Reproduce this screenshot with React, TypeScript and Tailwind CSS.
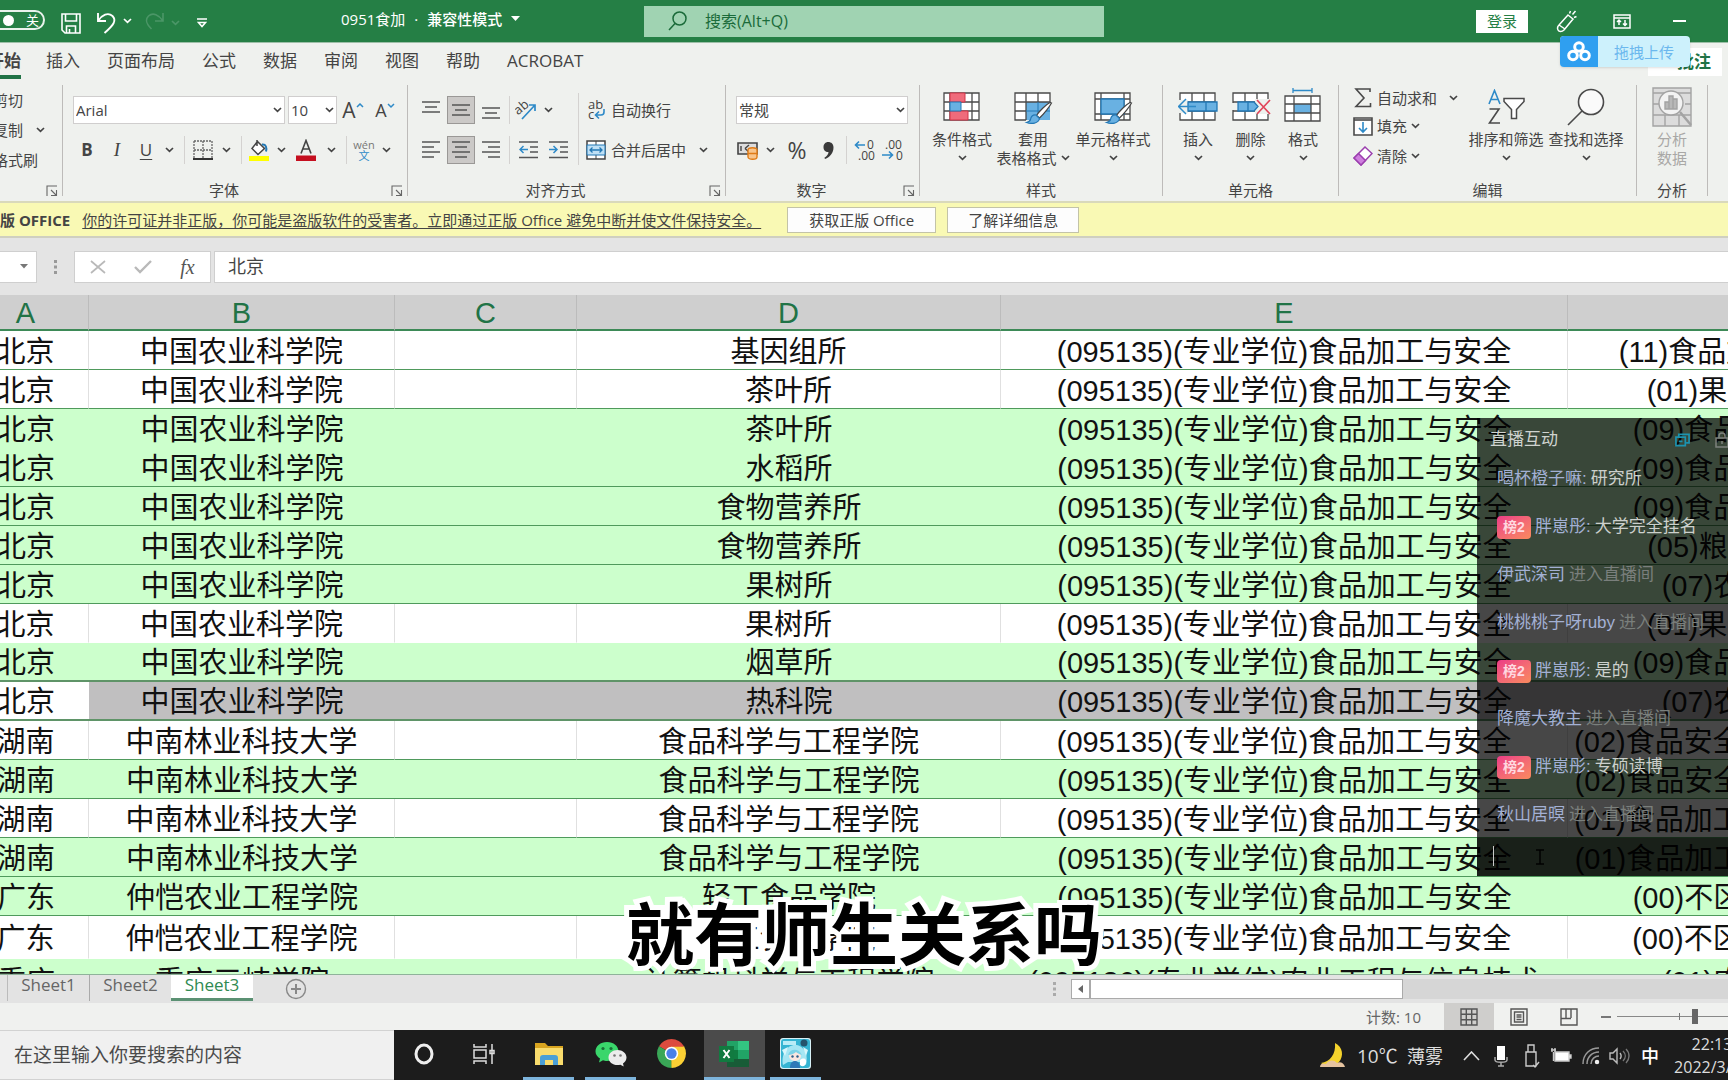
import type { ReactNode } from "react";

const UI = "font-['Open_Sans','Noto_Sans_CJK_SC',sans-serif]";
const CELL = "font-['Liberation_Sans','Noto_Sans_CJK_SC',sans-serif]";

/* ---------- sheet data ---------- */

type Row = {
  cells: [string, string, string, string, string];
  fill: "white" | "green" | "picked";
  line?: "none" | "thick";
};

const FOOD = "(095135)(专业学位)食品加工与安全";
const CAAS = "中国农业科学院";
const CSUFT = "中南林业科技大学";
const ZHKU = "仲恺农业工程学院";

const rows: Row[] = [
  { cells: ["北京", CAAS, "基因组所", FOOD, "(11)食品加工与质量安全"], fill: "white" },
  { cells: ["北京", CAAS, "茶叶所", FOOD, "(01)果茶加工与利用"], fill: "white" },
  { cells: ["北京", CAAS, "茶叶所", FOOD, "(09)食品加工与营养学"], fill: "green", line: "none" },
  { cells: ["北京", CAAS, "水稻所", FOOD, "(09)食品加工与营养学"], fill: "green" },
  { cells: ["北京", CAAS, "食物营养所", FOOD, "(09)食品加工与营养学"], fill: "green" },
  { cells: ["北京", CAAS, "食物营养所", FOOD, "(05)粮油加工与品质"], fill: "green" },
  { cells: ["北京", CAAS, "果树所", FOOD, "(07)农产品加工学"], fill: "green" },
  { cells: ["北京", CAAS, "果树所", FOOD, "(01)果蔬加工与贮藏"], fill: "white", line: "none" },
  { cells: ["北京", CAAS, "烟草所", FOOD, "(09)食品加工与营养学"], fill: "green", line: "thick" },
  { cells: ["北京", CAAS, "热科院", FOOD, "(07)农产品加工学"], fill: "picked", line: "thick" },
  { cells: ["湖南", CSUFT, "食品科学与工程学院", FOOD, "(02)食品安全与质量控制新技术"], fill: "white" },
  { cells: ["湖南", CSUFT, "食品科学与工程学院", FOOD, "(02)食品安全与质量控制新技术"], fill: "green" },
  { cells: ["湖南", CSUFT, "食品科学与工程学院", FOOD, "(01)食品加工与贮藏保鲜新技术"], fill: "white" },
  { cells: ["湖南", CSUFT, "食品科学与工程学院", FOOD, "(01)食品加工与贮藏保鲜新技术"], fill: "green" },
  { cells: ["广东", ZHKU, "轻工食品学院", FOOD, "(00)不区分各研究方向"], fill: "green" },
  { cells: ["广东", ZHKU, "轻工食品学院", FOOD, "(00)不区分各研究方向"], fill: "white", line: "none" },
  { cells: ["重庆", "重庆三峡学院", "计算机科学与工程学院", "(095136)(专业学位)农业工程与信息技术", "(01)农业信息技术"], fill: "green" },
];

type Msg = { name: string; text: string; kind: "say" | "join"; badge?: boolean };

const messages: Msg[] = [
  { name: "喝杯橙子嘛:", text: "研究所", kind: "say" },
  { name: "胖崽彤:", text: "大学完全挂名", kind: "say", badge: true },
  { name: "伊武深司", text: "进入直播间", kind: "join" },
  { name: "桃桃桃子呀ruby", text: "进入直播间", kind: "join" },
  { name: "胖崽彤:", text: "是的", kind: "say", badge: true },
  { name: "降魔大教主", text: "进入直播间", kind: "join" },
  { name: "胖崽彤:", text: "专硕读博", kind: "say", badge: true },
  { name: "秋山居暝", text: "进入直播间", kind: "join" },
];

/* ---------- small parts ---------- */

const Chevron = () => (
  <svg width="9" height="6" viewBox="0 0 9 6" fill="none" stroke="currentColor" strokeWidth="1.7">
    <path d="M1 1l3.5 3.3L8 1" />
  </svg>
);

const Btn = ({ label, className = "w-7", on, children }: { label: string; className?: string; on?: boolean; children: ReactNode }) => (
  <button
    aria-label={label}
    className={`flex h-7 shrink-0 items-center justify-center ${on ? "border border-[#9a9896] bg-[#cbc9c7]" : ""} ${className}`}
  >
    {children}
  </button>
);

const More = ({ label }: { label: string }) => (
  <Btn label={label} className="w-5">
    <Chevron />
  </Btn>
);

const Sep = ({ className = "mx-1" }: { className?: string }) => <span className={`h-7 w-px shrink-0 bg-[#d4d2d0] ${className}`} />;

const Select = ({ label, value, className }: { label: string; value: string; className: string }) => (
  <div className={`relative h-7 ${className}`}>
    <select aria-label={label} className="h-full w-full appearance-none border border-[#d0cece] bg-white pl-[2px] text-[15px] leading-5">
      <option>{value}</option>
    </select>
    <span className="pointer-events-none absolute top-[11px] right-[3px]">
      <Chevron />
    </span>
  </div>
);

const Launcher = () => (
  <button aria-label="更多设置" className="absolute right-1 bottom-1">
    <svg width="12" height="12" viewBox="0 0 12 12" fill="none" stroke="#666" strokeWidth="1.1">
      <path d="M1 11V1h10M5 5l5 5M10.5 5v5.500H5" />
    </svg>
  </button>
);

const Group = ({ name, className, launcher, children }: { name: string; className: string; launcher?: boolean; children: ReactNode }) => (
  <section aria-label={name} className="flex shrink-0">
    <div className={`relative flex h-[116px] flex-col ${className}`}>
      <div className="flex flex-1">{children}</div>
      <div className={`mb-[2px] h-[18px] text-center leading-[18px] ${launcher ? "pr-[22px]" : ""}`}>{name}</div>
      {launcher && <Launcher />}
    </div>
    <span className="h-[111px] w-px bg-[#bdbbb9]" />
  </section>
);

const Big = ({ icon, line1, line2, className, muted }: { icon: ReactNode; line1: string; line2?: string; className: string; muted?: boolean }) => (
  <button className={`flex shrink-0 flex-col items-center pt-[2px] whitespace-nowrap ${muted ? "text-[#a9a8a6]" : ""} ${className}`}>
    <span className="mb-[2px] flex h-10 items-center justify-center">{icon}</span>
    <span className="leading-5">{line1}</span>
    <span className="flex h-[18px] items-center gap-1 leading-[18px]">
      {line2}
      {!muted && <Chevron />}
    </span>
  </button>
);

/* line positions for the paragraph alignment glyphs */
const Lines = ({ spans, h = 18 }: { spans: [number, number, number][]; h?: number }) => (
  <svg width="18" height={h} viewBox={`0 0 18 ${h}`} stroke="#555" strokeWidth="1.5">
    {spans.map(([x1, x2, y]) => (
      <path key={y} d={`M${x1} ${y}H${x2}`} />
    ))}
  </svg>
);

const Indent = ({ out }: { out?: boolean }) => (
  <svg width="19" height="18" viewBox="0 0 19 18" fill="none" stroke="#555" strokeWidth="1.5">
    <path d="M0 1h19M11 6h8M11 11h8M0 16.500h19" />
    <path d={out ? "M9 8.500H1M4.500 5L1 8.500 4.500 12" : "M0 8.500h8M4.500 5L8 8.500 4.500 12"} stroke="#2e8ac8" />
  </svg>
);

const Grid = ({ children }: { children?: ReactNode }) => (
  <svg width="40" height="34" viewBox="0 0 40 34" fill="none">
    <path d="M2 3h35v27H2z" fill="#fff" />
    {children}
  </svg>
);

const Brush = () => (
  <>
    <path d="M37 12.500c-4 2-11 9-13.500 13l3 2.500C31 24 37 16 38.500 13z" fill="#fff" stroke="#444" strokeWidth="1.2" />
    <path d="M23 25c-4-.5-5 2-5.500 4.500-.5 2-2 2.500-4 3 5 1.800 12 1 13-4z" fill="#69b1e2" stroke="#2378b5" strokeWidth="1.2" />
  </>
);

const CondIcon = () => (
  <Grid>
    <path d="M2 3h35v27H2zM8 3v27M30 3v27M2 12h35M2 21h35" stroke="#4a4a4a" strokeWidth="1.3" />
    <path d="M8 3h15v9H8zM8 21h18v9H8z" fill="#ef6b7b" stroke="#d13448" />
    <path d="M8 12h11v9H8z" fill="#69b1e2" stroke="#2378b5" />
  </Grid>
);

const TableStyleIcon = () => (
  <Grid>
    <path d="M13 12h24v18H13z" fill="#69b1e2" />
    <path d="M2 3h35v9H2zM13 3v27M25 3v9M2 12v18h11M2 21h11" stroke="#4a4a4a" strokeWidth="1.3" />
    <path d="M25 12v18M13 21h24" stroke="#2378b5" />
    <Brush />
  </Grid>
);

const CellStyleIcon = () => (
  <Grid>
    <path d="M2 3h35v27H2zM8 3v27M31 3v27M2 9h35M2 24h35" stroke="#4a4a4a" strokeWidth="1.3" />
    <path d="M8 9h23v15H8z" fill="#69b1e2" stroke="#2378b5" strokeWidth="1.3" />
    <Brush />
  </Grid>
);

const InsertIcon = () => (
  <Grid>
    <path d="M2 3h35v27H2zM14 3v27M26 3v27M2 12h35M2 21h35" stroke="#4a4a4a" strokeWidth="1.3" />
    <path d="M0 10h10v13H0z" fill="#eef1ee" />
    <path d="M10 12h29v9H10zM28 12v9" fill="#69b1e2" stroke="#2378b5" strokeWidth="1.3" />
    <path d="M18 16.500H1M8 9l-7.500 7.500L8 24" stroke="#2e8ac8" strokeWidth="1.5" />
  </Grid>
);

const DeleteIcon = () => (
  <Grid>
    <path d="M2 3h35v27H2zM14 3v27M26 3v27M2 12h35M2 21h35" stroke="#4a4a4a" strokeWidth="1.3" />
    <path d="M0 13h6v7H0zM24 9h15v15H24z" fill="#eef1ee" />
    <path d="M7 12h16l4 4.500-4 4.500H7zM17 12v9" fill="#69b1e2" stroke="#2378b5" strokeWidth="1.3" />
    <path d="M26 10l13 14M39 10L26 24" stroke="#e0455a" strokeWidth="1.7" />
  </Grid>
);

const FormatIcon = () => (
  <svg width="40" height="40" viewBox="0 0 40 40" fill="none">
    <path d="M2 9h35v25H2z" fill="#fff" />
    <path d="M11 17h17v9H11z" fill="#69b1e2" />
    <path d="M2 9h35v25H2zM11 9v25M28 9v25M2 17h35M2 26h35" stroke="#4a4a4a" strokeWidth="1.3" />
    <path d="M10 3.500h19M10 1v5M29 1v5" stroke="#2e8ac8" strokeWidth="1.3" />
  </svg>
);

const SortIcon = () => (
  <svg width="38" height="36" viewBox="0 0 38 36" fill="none">
    <path d="M2 15L7.500 1.500 13 15M4 10.500h7" stroke="#2e8ac8" strokeWidth="1.6" />
    <path d="M2.500 20h9.500L2.500 34H13" stroke="#4a4a4a" strokeWidth="1.6" />
    <path d="M17 9.500h20v3l-7.500 8v9h-5v-9l-7.500-8z" fill="#fff" stroke="#4a4a4a" strokeWidth="1.5" />
  </svg>
);

const FindIcon = () => (
  <svg width="38" height="38" viewBox="0 0 38 38" fill="none" stroke="#4a4a4a" strokeWidth="1.6">
    <circle cx="24" cy="14" r="12.500" fill="#fafafa" />
    <path d="M15 23L1 37" />
  </svg>
);

const AnalyzeIcon = () => (
  <svg width="40" height="40" viewBox="0 0 40 40" fill="none" stroke="#a3a3a3" strokeWidth="1.4">
    <path d="M1 1h38v38H1z" fill="#dcdcdc" />
    <path d="M1 6h38M1 28h38M13 28v11M27 28v11M1 17h6M33 17h6" />
    <circle cx="19" cy="16" r="12" fill="#f3f3f3" />
    <path d="M28 25l11 13" strokeWidth="2.500" />
    <path d="M13 15h4v7h-4zM17 9h4v13h-4zM21 12h4v10h-4z" fill="#b8b8b8" />
  </svg>
);

/* ---------- window sections ---------- */

const TitleBar = () => (
  <header className="relative flex h-[42px] shrink-0 items-center bg-[#257f45] text-[15px] text-white">
    <button aria-label="自动保存" className="-ml-3 mb-[2px] flex h-5 w-[57px] items-center gap-3 rounded-full border-2 border-white/90 pl-[13px] text-[13px] leading-4">
      <span className="h-[11px] w-[11px] rounded-full bg-white" />关
    </button>
    <button aria-label="保存" className="ml-4 pt-1">
      <svg width="20" height="21" viewBox="0 0 20 21" fill="none" stroke="#fff" strokeWidth="1.6">
        <path d="M1 1h18v19H4l-3-3zM4.500 1v7h11V1M5.500 20v-7h9v7M8.500 20v-4" />
      </svg>
    </button>
    <button aria-label="撤消" className="ml-[15px] pt-1">
      <svg width="21" height="22" viewBox="0 0 21 22" fill="none" stroke="#fff" strokeWidth="1.9">
        <path d="M2 1v8h8M2.500 8.500C6 3 12 0 16.500 4c4.500 4.500 1 9-8 17" />
      </svg>
    </button>
    <span className="ml-[6px]"><Chevron /></span>
    <button aria-label="恢复" className="ml-3 flex items-center pt-1 text-[#4b9667]">
      <svg width="21" height="22" viewBox="0 0 21 22" fill="none" stroke="currentColor" strokeWidth="1.6">
        <path d="M19 1v8h-8M18.500 8.500C15 3 9 0 4.500 4c-4.500 4.500-1 9 3 13" />
      </svg>
      <span className="ml-[6px]"><Chevron /></span>
    </button>
    <button aria-label="自定义快速访问工具栏" className="ml-[17px] pt-1">
      <svg width="10" height="10" viewBox="0 0 10 10" fill="none" stroke="#fff" strokeWidth="1.5">
        <path d="M0 1h10M1.500 4.500h7L5 8.500z" />
      </svg>
    </button>
    <div className="ml-[134px] flex items-center gap-[9px] pb-[5px] leading-5 whitespace-nowrap">
      <span>0951食加</span>
      <span>·</span>
      <span className="font-medium">兼容性模式</span>
      <svg width="9" height="6" viewBox="0 0 9 6" fill="#fff"><path d="M0 0h9L4.500 5z" /></svg>
    </div>
    <label className="absolute inset-y-0 left-1/2 my-auto ml-[-220px] flex h-[31px] w-[460px] items-center bg-[#a0d3b2] pl-6 text-[#1b6b3a]">
      <svg width="19" height="20" viewBox="0 0 19 20" fill="none" stroke="currentColor" strokeWidth="1.5">
        <circle cx="11.500" cy="7.500" r="6.500" />
        <path d="M7 12.500L1 19" />
      </svg>
      <input aria-label="搜索" placeholder="搜索(Alt+Q)" className="ml-[18px] flex-1 bg-transparent text-[16px] leading-5 outline-none placeholder:text-[#1b6b3a]" />
    </label>
    <button className="ml-auto h-[23px] w-[52px] bg-white leading-[22px] text-[#257f45]">登录</button>
    <button aria-label="绘图" className="ml-7">
      <svg width="21" height="23" viewBox="0 0 21 23" fill="none" stroke="#fff" strokeWidth="1.5">
        <path d="M12 5l5 4-9 11c-2 2-5 2-6 0s0-4 1-5zM3 15l6 4M13.500 3.500l1-2.500M16.500 4.500l3-3.500M18 7.500l2.500-1" />
      </svg>
    </button>
    <button aria-label="功能区显示选项" className="ml-9">
      <svg width="18" height="15" viewBox="0 0 18 15" fill="none" stroke="#fff" strokeWidth="1.5">
        <path d="M1 1h16v13H1zM1 4h16" />
        <path d="M6 11V6.500M4 8l2-2 2 2M12 6v5M10 9.500l2 2 2-2" />
      </svg>
    </button>
    <button aria-label="最小化" className="mr-[42px] ml-[42px] h-4 w-[13px]">
      <span className="block h-[2px] bg-white" />
    </button>
  </header>
);

const tabs = ["插入", "页面布局", "公式", "数据", "审阅", "视图", "帮助", "ACROBAT"];

const TabRow = () => (
  <nav className="mb-[7px] flex h-9 shrink-0 border-t border-[#9dbfa8] text-[17px]">
    <button className="-ml-[13px] h-9 border-b-4 border-[#217346] pt-1 leading-7 font-bold">开始</button>
    <div className="ml-[25px] flex gap-[27px] pt-1 leading-7">
      {tabs.map((t) => (
        <button key={t} className="h-7">{t}</button>
      ))}
    </div>
    <button className="mt-[5px] mr-[6px] ml-auto h-7 w-[74px] bg-white pr-[11px] text-right leading-7 font-bold text-[#217346]">批注</button>
  </nav>
);

const Ribbon = () => (
  <div className="flex h-[116px] shrink-0 text-[15px] leading-5">
    <Group name="" launcher className="-ml-10 w-[102px]">
      <div className="flex flex-col pl-[33px]">
        <button className="flex h-[30px] items-center">剪切</button>
        <button className="flex h-[30px] items-center gap-[13px]">复制 <Chevron /></button>
        <button className="flex h-[30px] items-center whitespace-nowrap">格式刷</button>
      </div>
    </Group>

    <Group name="字体" launcher className="w-[344px]">
      <div className="flex flex-col gap-3 pt-[11px] pl-[10px]">
        <div className="flex">
          <Select label="字体" value="Arial" className="mr-[3px] w-[212px]" />
          <Select label="字号" value="10" className="w-[49px]" />
          <Btn label="增大字号" className="w-8 text-[21px]">
            A<svg width="8" height="14" viewBox="0 0 8 14" fill="none" stroke="#2e8ac8" strokeWidth="1.500"><path d="M1 4l3-3 3 3" /></svg>
          </Btn>
          <Btn label="减小字号" className="w-8 text-[18px]">
            A<svg width="8" height="14" viewBox="0 0 8 14" fill="none" stroke="#2e8ac8" strokeWidth="1.500"><path d="M1 1l3 3 3-3" /></svg>
          </Btn>
        </div>
        <div className="flex">
          <Btn label="加粗" className="w-7 text-[17px] font-bold">B</Btn>
          <Btn label="倾斜" className="w-8 font-['Liberation_Serif',serif] text-[19px] italic">I</Btn>
          <Btn label="下划线" className="w-[26px] text-[17px] underline underline-offset-[3px]">U</Btn>
          <More label="下划线样式" />
          <Sep className="mx-[5px]" />
          <Btn label="边框" className="w-[26px]">
            <svg width="20" height="20" viewBox="0 0 20 20" fill="none" stroke="#666" strokeWidth="1.300">
              <path d="M1 1h18v18M1 1v18M10 1v17M1 10h18" strokeDasharray="2 1" />
              <path d="M0 19h20" stroke="#333" strokeWidth="2" />
            </svg>
          </Btn>
          <More label="边框样式" />
          <Sep className="mx-[5px]" />
          <Btn label="填充颜色" className="w-6">
            <svg width="22" height="22" viewBox="0 0 22 22" fill="none">
              <path d="M9.500 2.500l7 7-6.500 6-6-6zM9 1v6" stroke="#444" strokeWidth="1.500" fill="#fff" />
              <path d="M14 5.500c4-.5 5 3 4 7" stroke="#2378b5" strokeWidth="2" />
              <path d="M1 17h20v5H1z" fill="#ffff00" />
            </svg>
          </Btn>
          <More label="填充颜色选项" />
          <Btn label="字体颜色" className="w-[30px]">
            <svg width="20" height="22" viewBox="0 0 20 22" fill="none">
              <path d="M5 14.500L10 1.500l5 13M6.500 10h7" stroke="#444" strokeWidth="1.600" />
              <path d="M0 16.500h20V22H0z" fill="#c50f1f" />
            </svg>
          </Btn>
          <More label="字体颜色选项" />
          <Sep className="mx-[5px]" />
          <Btn label="拼音" className="w-6 flex-col text-[11px] text-[#777]">
            <span className="leading-[11px]">wén</span>
            <span className="text-[11px] leading-3 text-[#2e8ac8]">文</span>
          </Btn>
          <More label="拼音选项" />
        </div>
      </div>
    </Group>

    <Group name="对齐方式" launcher className="w-[317px]">
      <div className="flex w-[170px] flex-col gap-3 pt-[11px] pl-[9px]">
        <div className="flex">
          <Btn label="顶端对齐"><Lines spans={[[0, 18, 1], [3, 15, 6], [0, 18, 11]]} /></Btn>
          <Btn label="垂直居中" on className="mx-[2px] w-7"><Lines spans={[[0, 18, 4], [3, 15, 9], [0, 18, 14]]} /></Btn>
          <Btn label="底端对齐"><Lines spans={[[0, 18, 7], [3, 15, 12], [0, 18, 17]]} /></Btn>
          <Sep />
          <Btn label="方向" className="w-6">
            <svg width="22" height="22" viewBox="0 0 22 22" fill="none">
              <text x="0" y="14" fontSize="13" fill="#444" transform="rotate(-40 5 11)">ab</text>
              <path d="M7 20L20 6M14 6h6v6" stroke="#2e8ac8" strokeWidth="1.700" />
            </svg>
          </Btn>
          <More label="方向选项" />
        </div>
        <div className="flex">
          <Btn label="左对齐"><Lines spans={[[0, 18, 1], [0, 12, 6], [0, 18, 11], [0, 12, 16]]} /></Btn>
          <Btn label="居中" on className="mx-[2px] w-7"><Lines spans={[[0, 18, 1], [3, 15, 6], [0, 18, 11], [3, 15, 16]]} /></Btn>
          <Btn label="右对齐"><Lines spans={[[0, 18, 1], [6, 18, 6], [0, 18, 11], [6, 18, 16]]} /></Btn>
          <Sep />
          <Btn label="减少缩进量"><Indent out /></Btn>
          <Btn label="增加缩进量" className="ml-[2px] w-7"><Indent /></Btn>
        </div>
      </div>
      <span className="mt-2 h-[72px] w-px bg-[#d4d2d0]" />
      <div className="flex flex-col gap-3 pt-[11px] pl-[7px]">
        <button className="flex h-7 items-center gap-[5px]">
          <svg width="20" height="20" viewBox="0 0 20 20" fill="none">
            <text x="2" y="9" fontSize="13" fill="#444">ab</text>
            <text x="2" y="19" fontSize="13" fill="#444">c</text>
            <path d="M18 9v3c0 2-1 3-3 3h-5M13 11.500L9.500 15l3.500 3.500" stroke="#2e8ac8" strokeWidth="1.600" />
          </svg>
          自动换行
        </button>
        <div className="flex">
          <button className="mr-[7px] flex h-7 items-center gap-[5px]">
            <svg width="20" height="20" viewBox="0 0 20 20" fill="none">
              <path d="M1 1h18v18H1z" fill="#fff" stroke="#444" strokeWidth="1.500" />
              <path d="M10 1v4M10 15v4" stroke="#444" />
              <path d="M1 5h18v10H1z" fill="#bfe0f5" stroke="#2378b5" />
              <path d="M4 10h12M6.500 7.500L4 10l2.500 2.500M13.500 7.500L16 10l-2.500 2.500" stroke="#2378b5" strokeWidth="1.300" />
            </svg>
            合并后居中
          </button>
          <More label="合并选项" />
        </div>
      </div>
    </Group>

    <Group name="数字" launcher className="w-[193px]">
      <div className="flex flex-col gap-3 pt-[11px] pl-[10px]">
        <Select label="数字格式" value="常规" className="w-[172px]" />
        <div className="flex">
          <Btn label="会计数字格式" className="w-6">
            <svg width="22" height="20" viewBox="0 0 22 20" fill="none">
              <path d="M1 3h19v11H1z" fill="#ddd" stroke="#444" strokeWidth="1.600" />
              <path d="M4 6v5M8 8.500L12 5M8 8.500L12 12" stroke="#444" strokeWidth="1.400" />
              <path d="M11 10c0-3 9-3 9 0v7c0 3-9 3-9 0zM11 13.500h9" fill="#f8c58c" stroke="#e07b16" strokeWidth="1.400" />
            </svg>
          </Btn>
          <More label="会计格式选项" />
          <Btn label="百分比样式" className="w-[34px] text-[23px]">%</Btn>
          <Btn label="千位分隔样式" className="w-7">
            <svg width="11" height="17" viewBox="0 0 11 17" fill="#3a3a3a">
              <path d="M5 0c3.500 0 5.500 2.200 5.500 5.500C10.500 11 7 15 2 17l-.6-1.200C4 14 5.500 12 5.500 10 2.500 10.200.5 8 .5 5.200.5 2.200 2.500 0 5 0z" />
            </svg>
          </Btn>
          <Sep />
          <Btn label="增加小数位数">
            <svg width="22" height="22" viewBox="0 0 22 22" fill="none">
              <text x="13" y="10" fontSize="12" fill="#444">0</text>
              <text x="4" y="21" fontSize="12" fill="#444">.00</text>
              <path d="M11 6H1M5 2.500L1.500 6 5 9.500" stroke="#2e8ac8" strokeWidth="1.600" />
            </svg>
          </Btn>
          <Btn label="减少小数位数">
            <svg width="22" height="22" viewBox="0 0 22 22" fill="none">
              <text x="3" y="10" fontSize="12" fill="#444">.00</text>
              <text x="14" y="21" fontSize="12" fill="#444">0</text>
              <path d="M0 16h11M7 12.500l3.500 3.500L7 19.500" stroke="#2e8ac8" strokeWidth="1.600" />
            </svg>
          </Btn>
        </div>
      </div>
    </Group>

    <Group name="样式" className="w-[242px]">
      <Big icon={<CondIcon />} line1="条件格式" className="ml-[9px] w-[66px]" />
      <Big icon={<TableStyleIcon />} line1="套用" line2="表格格式" className="w-[76px]" />
      <Big icon={<CellStyleIcon />} line1="单元格样式" className="w-[84px]" />
    </Group>

    <Group name="单元格" className="w-[175px]">
      <Big icon={<InsertIcon />} line1="插入" className="ml-[9px] w-[52px]" />
      <Big icon={<DeleteIcon />} line1="删除" className="w-[53px]" />
      <Big icon={<FormatIcon />} line1="格式" className="w-[52px]" />
    </Group>

    <Group name="编辑" className="w-[297px]">
      <div className="flex w-[127px] flex-col pl-[14px]">
        <button className="flex h-[26px] items-center gap-1">
          <svg width="20" height="20" viewBox="0 0 20 20" fill="none" stroke="#4a4a4a" strokeWidth="1.600">
            <path d="M17 4V1H3l8 9-8 8.500h14.500V15" />
          </svg>
          自动求和
          <span className="ml-2"><Chevron /></span>
        </button>
        <button className="flex h-[30px] items-center gap-1">
          <svg width="20" height="20" viewBox="0 0 20 20" fill="none" stroke="#4a4a4a" strokeWidth="1.600">
            <path d="M1 2h18v17H1z" fill="#fff" />
            <path d="M1 4h18" />
            <path d="M10 6v10M6 12l4 4 4-4" stroke="#2e8ac8" />
          </svg>
          填充 <Chevron />
        </button>
        <button className="flex h-[30px] items-center gap-1">
          <svg width="20" height="20" viewBox="0 0 20 20" fill="none" stroke="#9b3fae" strokeWidth="1.500">
            <path d="M12 1l7 6.500L8 19l-7-7z" fill="#fff" />
            <path d="M5.500 7.500l7 7L8 19l-7-7z" fill="#cf7ede" />
          </svg>
          清除 <Chevron />
        </button>
      </div>
      <Big icon={<SortIcon />} line1="排序和筛选" className="w-20" />
      <Big icon={<FindIcon />} line1="查找和选择" className="w-20" />
    </Group>

    <Group name="分析" className="w-[70px]">
      <Big icon={<AnalyzeIcon />} line1="分析" line2="数据" muted className="w-[70px]" />
    </Group>
  </div>
);

const LicenseBar = () => (
  <div className="flex h-[37px] shrink-0 items-center border-y-2 border-t-[#d9d9bb] border-b-[#cfcfc0] bg-[#f9f9b4] text-[15px] leading-5 whitespace-nowrap">
    <strong>版 OFFICE</strong>
    <a href="#license" className="ml-3 underline underline-offset-2">
      你的许可证并非正版，你可能是盗版软件的受害者。立即通过正版 Office 避免中断并使文件保持安全。
    </a>
    <button className="ml-[26px] h-[26px] w-[149px] border border-[#c3c3a8] bg-[#fdfdfd]">获取正版 Office</button>
    <button className="ml-[11px] h-[26px] w-[132px] border border-[#c3c3a8] bg-[#fdfdfd]">了解详细信息</button>
  </div>
);

const FormulaBar = () => (
  <div className="flex h-[57px] shrink-0 items-center bg-[#e4e4e4]">
    <button aria-label="名称框" className="flex h-8 w-[37px] items-center justify-end border border-l-0 border-[#cfcfcf] bg-white pr-2">
      <svg width="8" height="5" viewBox="0 0 8 5" fill="#777"><path d="M0 0h8L4 4.500z" /></svg>
    </button>
    <svg className="mx-[17px]" width="3" height="14" viewBox="0 0 3 14" fill="#999">
      <path d="M0 0h3v3H0zM0 5.500h3v3H0zM0 11h3v3H0z" />
    </svg>
    <div className="flex h-8 w-[137px] items-center border border-[#cfcfcf] bg-white">
      <Btn label="取消" className="w-[45px]">
        <svg width="16" height="14" viewBox="0 0 16 14" stroke="#b9b9b9" strokeWidth="1.700"><path d="M1 1l14 12M15 1L1 13" /></svg>
      </Btn>
      <Btn label="输入" className="w-[45px]">
        <svg width="18" height="14" viewBox="0 0 18 14" fill="none" stroke="#b9b9b9" strokeWidth="2.400"><path d="M1 7l5 5L17 1" /></svg>
      </Btn>
      <Btn label="插入函数" className="w-[45px] font-['Liberation_Serif',serif] text-[20px] text-[#555] italic">fx</Btn>
    </div>
    <input
      aria-label="编辑栏"
      defaultValue="北京"
      className="ml-[3px] h-8 flex-1 border border-r-0 border-[#cfcfcf] bg-white pb-[3px] pl-[13px] text-[18px] leading-6 outline-none"
    />
  </div>
);

const cellClass = (row: Row, col: number) => {
  const fill = row.fill === "green" ? "bg-[#ccffcc]" : row.fill === "picked" && col > 0 ? "bg-[#c0bfc0]" : "bg-white";
  const side = row.fill === "white" ? "border-r border-r-[#e0e0e0]" : "";
  const base = row.fill === "green" ? "border-b-[#ccffcc]" : "border-b-white";
  const line =
    row.line === "none"
      ? `border-b leading-[34px] ${base}`
      : row.line === "thick"
        ? "border-b-2 border-b-[#5f9468] leading-[33px]"
        : "border-b border-b-[#4f9a5c] leading-[34px]";
  return `px-0 pt-1 pb-0 ${fill} ${side} ${line}`;
};

const ChatPanel = () => (
  <aside className="absolute top-[123px] right-0 flex w-[251px] flex-col overflow-hidden bg-black/72 text-[17px] whitespace-nowrap">
    <div className="flex h-9 items-center pt-2 pl-[13px] leading-6 text-[#cfd3cf]">
      直播互动
      <svg className="ml-auto" width="15" height="14" viewBox="0 0 16 14" fill="none" stroke="#1c93b0" strokeWidth="1.800">
        <path d="M4 3V1h11v9h-3M1 4h10v9H1zM4 8.500h4" />
      </svg>
      <svg className="-mr-px ml-[25px]" width="14" height="16" viewBox="0 0 14 16" fill="none" stroke="#7d827d" strokeWidth="1.500">
        <path d="M4 6V4c0-4 6-4 6 0v2M1 6h12v9H1zM7 9v3" />
      </svg>
    </div>
    <ul>
      {messages.map((m, i) => (
        <li key={i} className="flex h-12 items-center gap-1 pt-[2px] pl-5 leading-6">
          {m.badge && (
            <b className="flex h-[23px] w-[34px] items-center justify-center rounded-sm bg-linear-to-br from-[#ec3a86] to-[#f98a5c] text-[14px] text-[#ffd9e0]">
              榜2
            </b>
          )}
          <span className="text-[#a3b0d4]">{m.name}</span>
          <span className={m.kind === "say" ? "text-[#ccd0cc]" : "text-[#7a7f7c]"}>{m.text}</span>
        </li>
      ))}
    </ul>
    <div className="relative h-[38px] bg-black/55">
      <input aria-label="发送消息" className="h-full w-full bg-transparent pl-4 text-white outline-none" />
      <span className="absolute top-2 left-4 h-5 w-px bg-[#c8c8c8]" />
      <svg className="absolute top-[11px] left-[59px]" width="8" height="16" viewBox="0 0 8 16" fill="none" stroke="#000" strokeWidth="1.500">
        <path d="M0 1h8M4 1v14M0 15h8" />
      </svg>
    </div>
  </aside>
);

const Sheet = () => (
  <main className={`relative min-h-0 flex-1 overflow-hidden ${CELL}`}>
    <table className="-ml-[37px] w-[2018px] table-fixed border-separate border-spacing-0 text-center text-[29px] whitespace-nowrap text-[#111]">
      <colgroup>
        <col className="w-[126px]" />
        <col className="w-[306px]" />
        <col className="w-[182px]" />
        <col className="w-[424px]" />
        <col className="w-[567px]" />
        <col className="w-[413px]" />
      </colgroup>
      <thead>
        <tr>
          {["A", "B", "C", "D", "E", "F"].map((c) => (
            <th key={c} className="h-9 border-r border-b-2 border-r-[#bcbcbc] border-b-[#3d8a57] bg-[#cfcfcf] px-0 pt-[2px] pb-0 leading-8 font-normal text-[#217346]">
              {c}
            </th>
          ))}
        </tr>
      </thead>
      <tbody>
        {rows.map((row, i) => (
          <tr key={i} className={i >= 15 ? "h-[43px]" : "h-[39px]"}>
            {[row.cells[0], row.cells[1], "", row.cells[2], row.cells[3], row.cells[4]].map((text, col) => (
              <td key={col} className={cellClass(row, col)}>{text}</td>
            ))}
          </tr>
        ))}
      </tbody>
    </table>
    <ChatPanel />
  </main>
);

const SheetTabs = () => (
  <div className="flex h-[29px] shrink-0 border-t border-[#8fb39a] bg-[#e3e3e3] text-[17px] leading-5 text-[#666]">
    <span className="ml-[7px] h-[26px] w-px bg-[#bbb]" />
    <button className="h-5 w-[81px]">Sheet1</button>
    <span className="h-[26px] w-px bg-[#aaa]" />
    <button className="h-5 w-[81px]">Sheet2</button>
    <button className="h-[26px] w-[82px] border-b-[3px] border-[#5b9173] bg-white pb-[3px] text-[#2f8a52]">Sheet3</button>
    <button aria-label="新工作表" className="ml-8 flex h-7 items-center">
      <svg width="22" height="22" viewBox="0 0 22 22" fill="none" stroke="#888" strokeWidth="1.400">
        <circle cx="11" cy="11" r="9.500" />
        <path d="M11 6v10M6 11h10" strokeWidth="2" />
      </svg>
    </button>
    <div className="ml-auto flex w-[675px] items-center">
      <svg width="3" height="14" viewBox="0 0 3 14" fill="#aaa">
        <path d="M0 0h3v3H0zM0 5.500h3v3H0zM0 11h3v3H0z" />
      </svg>
      <button aria-label="向左滚动" className="ml-[15px] flex h-5 w-[19px] items-center justify-center border border-[#aaa] bg-white">
        <svg width="5" height="8" viewBox="0 0 5 8" fill="#666"><path d="M5 0v8L0 4z" /></svg>
      </button>
      <div className="h-5 flex-1 bg-[#d6d6d6]">
        <div className="h-5 w-[313px] border border-[#aaa] bg-white" />
      </div>
    </div>
  </div>
);

const StatusBar = () => (
  <div className="flex h-[27px] shrink-0 items-center justify-end bg-[#f0f1ef] text-[15px] text-[#666]">
    <span className="mr-[23px] leading-5">计数: 10</span>
    <button aria-label="普通" className="flex h-full w-[50px] items-center justify-center bg-[#cfcecc]">
      <svg width="18" height="18" viewBox="0 0 18 18" fill="none" stroke="#555" strokeWidth="1.400">
        <path d="M1 1h16v16H1zM6.300 1v16M11.700 1v16M1 6.300h16M1 11.700h16" />
      </svg>
    </button>
    <button aria-label="页面布局视图" className="flex h-full w-[50px] items-center justify-center">
      <svg width="18" height="18" viewBox="0 0 18 18" fill="none" stroke="#555" strokeWidth="1.400">
        <path d="M1 1h16v16H1zM4.500 4h9v10h-9zM6.500 7h5M6.500 9h5M6.500 11.500h5" />
      </svg>
    </button>
    <button aria-label="分页预览" className="flex h-full w-[50px] items-center justify-center">
      <svg width="18" height="18" viewBox="0 0 18 18" fill="none" stroke="#555" strokeWidth="1.400">
        <path d="M1 1h16v16H1zM6 1v9M11 1v9M1 10.500h10" />
      </svg>
    </button>
    <button aria-label="缩小" className="ml-[7px] w-[10px]"><span className="block h-[2px] bg-[#777]" /></button>
    <div className="relative ml-[6px] h-full w-[111px]">
      <input type="range" aria-label="显示比例" className="absolute inset-0 w-full opacity-0" />
      <span className="pointer-events-none absolute top-[13px] h-px w-full bg-[#888]" />
      <span className="pointer-events-none absolute top-[10px] left-[62px] h-[7px] w-px bg-[#777]" />
      <span className="pointer-events-none absolute top-[6px] left-[75px] h-[15px] w-[6px] bg-[#666]" />
    </div>
  </div>
);

const Task = ({ label, className, bar, children }: { label: string; className: string; bar?: boolean; children: ReactNode }) => (
  <button aria-label={label} className={`flex h-full shrink-0 flex-col items-center ${className}`}>
    <span className="flex flex-1 items-center">{children}</span>
    <span className={`h-[3px] w-full ${bar ? "bg-[#7db4dc]" : ""}`} />
  </button>
);

const TaskBar = () => (
  <footer className="flex h-[50px] shrink-0 overflow-hidden bg-[#1c1c1c] text-white">
    <input
      aria-label="搜索"
      placeholder="在这里输入你要搜索的内容"
      className="w-[394px] shrink-0 border-y border-[#d2d2d2] bg-[#f0f0f0] pl-[14px] text-[19px] outline-none placeholder:text-[#4a4a4a]"
    />
    <Task label="Cortana" className="w-[60px]">
      <svg width="20" height="22" viewBox="0 0 20 22" fill="none" stroke="#eee" strokeWidth="3"><ellipse cx="10" cy="11" rx="8" ry="9" /></svg>
    </Task>
    <Task label="任务视图" className="w-[60px]">
      <svg width="22" height="20" viewBox="0 0 22 20" fill="none" stroke="#ddd" strokeWidth="1.500">
        <path d="M1 0v3h12V0M1 6h12v8H1zM1 20v-3h12v3M19 0v20M17 6.500h4v3h-4z" />
      </svg>
    </Task>
    <Task label="文件资源管理器" bar className="ml-[9px] w-[51px]">
      <svg width="28" height="24" viewBox="0 0 28 24">
        <path d="M0 1h10l3 3h15v19H0z" fill="#d9a520" />
        <path d="M0 6h28v17H0z" fill="#f9dc6d" />
        <path d="M5 23v-7c0-2 1-3 3-3h12c2 0 3 1 3 3v7h-5v-5h-8v5z" fill="#4a9fd6" />
      </svg>
    </Task>
    <Task label="微信" bar className="ml-[11px] w-[51px]">
      <svg width="32" height="26" viewBox="0 0 32 26">
        <path d="M12 1c6.500 0 11.500 4 11.500 9.500S18.500 20 12 20c-1.500 0-3-.3-4-.7L4 21.500l1-4C2.500 16 .5 13.500.5 10.500.5 5 5.500 1 12 1z" fill="#3ad66b" />
        <circle cx="8" cy="7.500" r="1.600" fill="#1a6e38" />
        <circle cx="16" cy="7.500" r="1.600" fill="#1a6e38" />
        <path d="M22.500 9c5 0 9 3.200 9 7.500 0 2.500-1.500 4.500-3.500 6l.7 3-3.300-1.700c-1 .2-1.900.3-2.900.3-5 0-9-3.300-9-7.600S17.500 9 22.500 9z" fill="#ececec" />
        <circle cx="19.500" cy="14.500" r="1.300" fill="#777" />
        <circle cx="25.500" cy="14.500" r="1.300" fill="#777" />
      </svg>
    </Task>
    <Task label="Chrome" className="ml-[10px] w-[50px]">
      <svg width="29" height="29" viewBox="0 0 28 28">
        <path d="M14 14L1.900 7A14 14 0 0 1 26.100 7z" fill="#dd4b3e" />
        <path d="M14 14L26.100 7A14 14 0 0 1 14 28z" fill="#fbd034" />
        <path d="M14 14V28A14 14 0 0 1 1.900 7z" fill="#3aa757" />
        <path d="M14 7.500h12.400L20 17l-6 11z" fill="#fbd034" />
        <circle cx="14" cy="14" r="6.500" fill="#fff" />
        <circle cx="14" cy="14" r="5" fill="#4a80e8" />
      </svg>
    </Task>
    <Task label="Excel" bar className="ml-2 w-[61px] bg-[#4b4b4b]">
      <svg width="31" height="30" viewBox="0 0 31 28">
        <path d="M8 1h11v9H8z" fill="#21a366" />
        <path d="M19 1h11v9H19z" fill="#33c481" />
        <path d="M8 10h11v9H8z" fill="#107c41" />
        <path d="M19 10h11v9H19z" fill="#21a366" />
        <path d="M8 19h22v8H8z" fill="#185c37" />
        <path d="M0 6h15v16H0z" fill="#117a40" />
        <path d="M4.500 10l6 8M10.500 10l-6 8" stroke="#fff" strokeWidth="2" />
      </svg>
    </Task>
    <Task label="直播伴侣" bar className="ml-[5px] w-[51px]">
      <svg width="31" height="31" viewBox="0 0 31 31">
        <rect width="31" height="31" rx="3" fill="#d8f1f7" />
        <rect x="1" y="1" width="29" height="29" rx="3" fill="#35b4d2" />
        <path d="M3 3h13v4H3z" fill="#b9ecf6" />
        <circle cx="24" cy="5" r="3.500" fill="#24546c" />
        <path d="M3 27C1 16 7 7 15 7s14 8 11 20l-4-3H8z" fill="#a5e6f3" />
        <path d="M2 12l6-3-3 9zM28 12l-5-3 3 9z" fill="#d6f6fb" />
        <ellipse cx="15" cy="18" rx="6" ry="5" fill="#fbe6e0" />
        <path d="M8 17c2-7 11-7 14 0-3-1-5-2-6-3-2 2-5 3-8 3z" fill="#7cd3e8" />
        <circle cx="12.500" cy="18.500" r="1.200" fill="#2b5f8c" />
        <circle cx="17.500" cy="18.500" r="1.200" fill="#2b5f8c" />
        <path d="M10 30c0-5 2-7 5-7s5 2 5 7z" fill="#2c79b8" />
        <path d="M20 22c4-3 7-1 6 3s-4 4-6 2z" fill="#fff" />
      </svg>
    </Task>

    <div className="ml-auto flex shrink-0 items-center pt-[2px]">
      <svg width="28" height="26" viewBox="0 0 28 26">
        <path d="M16 0c8 4 9 13 4 19-5 5-13 5-18 1C11 19 17 11 16 0z" fill="#f5d32c" />
        <path d="M1 24c0-4 4-4 6-3 2-4 8-5 11-1 3-2 7 0 8 4z" fill="#e6c3a0" />
      </svg>
      <span className="ml-[10px] w-[50px] text-[19px] leading-6 text-[#ddd]">10℃</span>
      <span className="w-14 text-[18px] leading-6 text-[#ddd]">薄雾</span>
      <svg width="17" height="10" viewBox="0 0 17 10" fill="none" stroke="#ddd" strokeWidth="1.600"><path d="M1 9l7.500-8L16 9" /></svg>
      <svg className="ml-[14px]" width="14" height="22" viewBox="0 0 14 22" fill="none" stroke="#aaa" strokeWidth="1.500">
        <path d="M3 1h8v14H3z" fill="#fff" stroke="none" />
        <path d="M1 12v3c0 3 12 3 12 0v-3M7 18v3M4 21h6" />
      </svg>
      <svg className="ml-[16px]" width="16" height="24" viewBox="0 0 16 24" fill="none" stroke="#ccc" strokeWidth="1.400">
        <path d="M4 8V1h6v7M2 8h10v14H2zM9 21l2 2 4-5" />
      </svg>
      <svg className="ml-[10px]" width="22" height="18" viewBox="0 0 22 18" fill="none" stroke="#ccc" strokeWidth="1.400">
        <path d="M5 5h14v9H5zM19 8h2v3h-2z" fill="#fff" />
        <path d="M1 3h5M2 1v4M5 1v4M3.500 5v9" />
      </svg>
      <svg className="ml-[10px]" width="18" height="18" viewBox="0 0 18 18" fill="none" stroke="#999" strokeWidth="1.500">
        <path d="M1 17C1 7 8 1 17 1M5 17C5 10 10 5 17 5M9 17c0-5 4-8 8-8" />
        <circle cx="15" cy="15" r="1.500" fill="#eee" stroke="#eee" />
      </svg>
      <svg className="ml-[9px]" width="21" height="18" viewBox="0 0 21 18" fill="none" stroke="#bbb" strokeWidth="1.400">
        <path d="M1 6h3l4-4v14l-4-4H1zM11 6c1.500 2 1.500 4 0 6" />
        <path d="M14 4c3 3 3 7 0 10M17 2c4 4 4 10 0 14" stroke="#777" />
      </svg>
      <span className="ml-[11px] w-[18px] text-[18px] leading-6 font-medium">中</span>
      <span className="-mr-[22px] ml-[15px] w-[76px] text-center text-[16px] leading-[23px] text-[#ddd]">
        22:13
        <br />
        2022/3/14
      </span>
    </div>
  </footer>
);

const UploadBadge = () => (
  <button className="absolute top-9 right-[38px] flex h-[31px] w-[130px] items-center overflow-hidden rounded bg-[#cdf1fc] shadow">
    <span className="flex h-full w-[38px] items-center justify-center bg-[#2f9ff0]">
      <svg width="24" height="22" viewBox="0 0 24 22" fill="none" stroke="#fff" strokeWidth="3">
        <circle cx="12" cy="6" r="4.300" />
        <circle cx="6" cy="14.500" r="4.300" />
        <circle cx="18" cy="14.500" r="4.300" />
      </svg>
    </span>
    <span className="flex-1 text-center text-[15px] leading-5 text-[#6cb8ee]">拖拽上传</span>
  </button>
);

const App = () => {
  return (
    <div className={`relative flex h-screen flex-col overflow-hidden bg-[#eff1ee] text-[#444] ${UI}`}>
      <TitleBar />
      <TabRow />
      <Ribbon />
      <LicenseBar />
      <FormulaBar />
      <Sheet />
      <SheetTabs />
      <StatusBar />
      <TaskBar />
      <UploadBadge />

      {/* Subtitle line over the window */}
      <p className="pointer-events-none absolute inset-x-0 bottom-[109px] text-center font-['Noto_Sans_CJK_SC',sans-serif] text-[68px] leading-[80px] font-bold text-black [-webkit-text-stroke:10px_white] [paint-order:stroke_fill]">
        就有师生关系吗
      </p>
    </div>
  );
};

export default App;
